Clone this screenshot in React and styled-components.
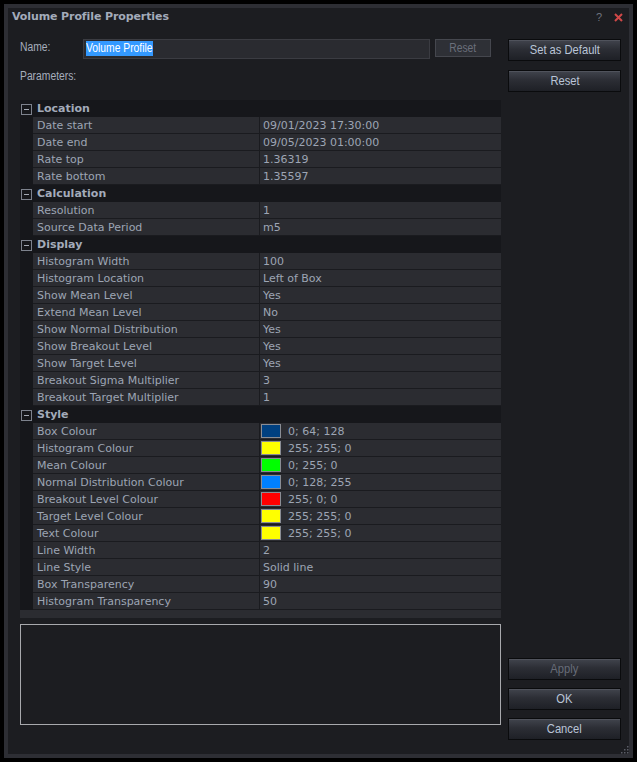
import styled, { createGlobalStyle } from "styled-components";

const GlobalStyle = createGlobalStyle`
  html, body {
    margin: 0;
    padding: 0;
    background: #000;
  }
  body {
    padding: 4px;
    box-sizing: border-box;
    width: 637px;
    height: 762px;
  }
  #root {
    height: 100%;
  }
`;

const sections = [
  {
    title: "Location",
    rows: [
      { name: "Date start", value: "09/01/2023 17:30:00" },
      { name: "Date end", value: "09/05/2023 01:00:00" },
      { name: "Rate top", value: "1.36319" },
      { name: "Rate bottom", value: "1.35597" },
    ],
  },
  {
    title: "Calculation",
    rows: [
      { name: "Resolution", value: "1" },
      { name: "Source Data Period", value: "m5" },
    ],
  },
  {
    title: "Display",
    rows: [
      { name: "Histogram Width", value: "100" },
      { name: "Histogram Location", value: "Left of Box" },
      { name: "Show Mean Level", value: "Yes" },
      { name: "Extend Mean Level", value: "No" },
      { name: "Show Normal Distribution", value: "Yes" },
      { name: "Show Breakout Level", value: "Yes" },
      { name: "Show Target Level", value: "Yes" },
      { name: "Breakout Sigma Multiplier", value: "3" },
      { name: "Breakout Target Multiplier", value: "1" },
    ],
  },
  {
    title: "Style",
    rows: [
      { name: "Box Colour", value: "0; 64; 128", swatch: "#004080" },
      { name: "Histogram Colour", value: "255; 255; 0", swatch: "#ffff00" },
      { name: "Mean Colour", value: "0; 255; 0", swatch: "#00ff00" },
      { name: "Normal Distribution Colour", value: "0; 128; 255", swatch: "#0080ff" },
      { name: "Breakout Level Colour", value: "255; 0; 0", swatch: "#ff0000" },
      { name: "Target Level Colour", value: "255; 255; 0", swatch: "#ffff00" },
      { name: "Text Colour", value: "255; 255; 0", swatch: "#ffff00" },
      { name: "Line Width", value: "2" },
      { name: "Line Style", value: "Solid line" },
      { name: "Box Transparency", value: "90" },
      { name: "Histogram Transparency", value: "50" },
    ],
  },
];

const CollapseIcon = () => (
  <svg width="11" height="11" viewBox="0 0 11 11">
    <rect x="0.5" y="0.5" width="10" height="10" fill="#16171b" stroke="#7d828d" />
    <line x1="3" y1="5.5" x2="8" y2="5.5" stroke="#a3a8b3" />
  </svg>
);

const CloseIcon = () => (
  <svg width="9" height="9" viewBox="0 0 9 9">
    <path d="M1 1 L8 8 M8 1 L1 8" stroke="#d04848" strokeWidth="2" />
  </svg>
);

const Grip = () => (
  <svg width="9" height="9" viewBox="0 0 9 9">
    {[
      [7, 1], [7, 4], [4, 4], [7, 7], [4, 7], [1, 7],
    ].map(([x, y]) => (
      <rect key={`${x}-${y}`} x={x} y={y} width="1.5" height="1.5" fill="#5a5d66" />
    ))}
  </svg>
);

const App = () => {
  return (
    <>
      <GlobalStyle />
      <Frame>
        <TitleBar>
          <Title>Volume Profile Properties</Title>
          <TitleTools>
            <Help>?</Help>
            <CloseIcon />
          </TitleTools>
        </TitleBar>
        <Body>
          <MainColumn>
            <NameRow>
              <Label>
                <Narrow>Name:</Narrow>
              </Label>
              <NameInput>
                <Selected>
                  <Narrow>Volume Profile</Narrow>
                </Selected>
              </NameInput>
              <SmallButton>
                <Narrow>Reset</Narrow>
              </SmallButton>
            </NameRow>
            <ParamsLabel>
              <Narrow>Parameters:</Narrow>
            </ParamsLabel>
            <PropertyGrid>
              {sections.map((section) => (
                <Section key={section.title}>
                  <SectionHeader>
                    <IconCell>
                      <CollapseIcon />
                    </IconCell>
                    <SectionTitle>{section.title}</SectionTitle>
                  </SectionHeader>
                  {section.rows.map((row) => (
                    <Row key={row.name}>
                      <NameCell>{row.name}</NameCell>
                      <ValueCell>
                        {row.swatch && <Swatch color={row.swatch} />}
                        {row.value}
                      </ValueCell>
                    </Row>
                  ))}
                </Section>
              ))}
              <ScrollStrip />
            </PropertyGrid>
            <Description />
          </MainColumn>
          <SideColumn>
            <TopButtons>
              <DialogButton>
                <Narrow>Set as Default</Narrow>
              </DialogButton>
              <DialogButton>
                <Narrow>Reset</Narrow>
              </DialogButton>
            </TopButtons>
            <BottomButtons>
              <DialogButton disabled>
                <Narrow>Apply</Narrow>
              </DialogButton>
              <DialogButton>
                <Narrow>OK</Narrow>
              </DialogButton>
              <DialogButton>
                <Narrow>Cancel</Narrow>
              </DialogButton>
            </BottomButtons>
          </SideColumn>
        </Body>
        <GripCorner>
          <Grip />
        </GripCorner>
      </Frame>
    </>
  );
};

export default App;

const gridFont = `"DejaVu Sans", Verdana, sans-serif`;

// the dialog uses a condensed face for labels and buttons
const Narrow = styled.span`
  display: inline-block;
  font-family: "Liberation Sans", Arial, sans-serif;
  transform: scaleX(0.86);
  transform-origin: center;
  white-space: nowrap;
`;

const Frame = styled.div`
  position: relative;
  box-sizing: border-box;
  width: 629px;
  height: 754px;
  border: 4px solid #2d2e34;
  background: #1c1d21;
  display: flex;
  flex-direction: column;
`;

const TitleBar = styled.div`
  height: 17px;
  display: flex;
  align-items: center;
  justify-content: space-between;
  padding: 0 6px 0 4px;
`;

const Title = styled.div`
  font-family: "DejaVu Sans", sans-serif;
  font-weight: bold;
  font-size: 11px;
  letter-spacing: -0.1px;
  color: #a3abba;
`;

const TitleTools = styled.div`
  display: flex;
  align-items: center;
  gap: 12px;
  padding-top: 1px;
`;

const Help = styled.span`
  font-family: "Liberation Sans", sans-serif;
  font-size: 11px;
  color: #6e737e;
`;

const Body = styled.div`
  flex: 1;
  display: flex;
  gap: 7px;
  padding: 14px 8px 14px 12px;
  min-height: 0;
`;

const MainColumn = styled.div`
  flex: 1;
  display: flex;
  flex-direction: column;
`;

const NameRow = styled.div`
  display: flex;
  align-items: flex-start;
  height: 20px;
`;

const Label = styled.div`
  width: 63px;
  font-size: 12px;
  color: #a6aebd;
  line-height: 16px;
  & > span {
    transform-origin: left center;
  }
`;

const NameInput = styled.div`
  box-sizing: border-box;
  width: 347px;
  height: 20px;
  background: #2a2b30;
  border: 1px solid #3b3c42;
  padding: 1px 2px;
  font-size: 12px;
  line-height: 15px;
`;

const Selected = styled.span`
  display: inline-block;
  background: #3399ff;
  color: #ffffff;
  width: 67px;
  overflow: hidden;
  & > span {
    transform-origin: left center;
  }
`;

const SmallButton = styled.div`
  box-sizing: border-box;
  width: 56px;
  height: 18px;
  margin-left: 5px;
  background: #2e3036;
  border: 1px solid #45474e;
  color: #6a6f7b;
  font-size: 12px;
  line-height: 16px;
  text-align: center;
`;

const ParamsLabel = styled(Label)`
  width: auto;
  margin-top: 9px;
`;

const PropertyGrid = styled.div`
  margin-top: 16px;
  background: #16171b;
  display: flex;
  flex-direction: column;
`;

const Section = styled.div`
  display: flex;
  flex-direction: column;
`;

const SectionHeader = styled.div`
  height: 17px;
  display: flex;
  align-items: center;
  background: #16171b;
`;

const IconCell = styled.div`
  width: 13px;
  display: flex;
  justify-content: center;
  align-items: center;
  padding-top: 1px;
`;

const SectionTitle = styled.div`
  padding-left: 4px;
  font-family: ${gridFont};
  font-weight: bold;
  font-size: 11px;
  color: #a3abba;
`;

const Row = styled.div`
  height: 17px;
  margin-left: 13px;
  display: grid;
  grid-template-columns: 227px 1fr;
  box-sizing: border-box;
  border-bottom: 1px solid #1a1b1f;
`;

const NameCell = styled.div`
  background: #2b2c31;
  border-right: 1px solid #1a1b1f;
  padding: 1px 0 0 4px;
  font-family: ${gridFont};
  font-size: 11px;
  line-height: 15px;
  color: #9da5b4;
  white-space: nowrap;
  overflow: hidden;
`;

const ValueCell = styled.div`
  background: #2b2c31;
  padding: 1px 0 0 3px;
  display: flex;
  align-items: center;
  gap: 7px;
  font-family: ${gridFont};
  font-size: 11px;
  line-height: 15px;
  color: #9da5b4;
  white-space: nowrap;
`;

const Swatch = styled.span`
  box-sizing: border-box;
  width: 20px;
  height: 14px;
  margin: -1px 0 0 -2px;
  border: 1px solid #8a8d94;
  background: ${(p) => p.color};
`;

const ScrollStrip = styled.div`
  height: 8px;
  background: #2b2c31;
`;

const Description = styled.div`
  box-sizing: border-box;
  margin-top: 6px;
  height: 101px;
  border: 1px solid #a8a9ad;
  background: #1c1d21;
`;

const SideColumn = styled.div`
  width: 113px;
  display: flex;
  flex-direction: column;
  justify-content: space-between;
`;

const TopButtons = styled.div`
  display: flex;
  flex-direction: column;
  gap: 9px;
`;

const BottomButtons = styled.div`
  display: flex;
  flex-direction: column;
  gap: 8px;
`;

const DialogButton = styled.div`
  box-sizing: border-box;
  height: 22px;
  border: 1px solid #0a0b0d;
  background: linear-gradient(#41444d 0%, #2c2e35 45%, #1e2026 100%);
  box-shadow: inset 0 1px 0 #50535c;
  color: ${(p) => (p.disabled ? "#676c78" : "#bac5d8")};
  font-size: 13px;
  line-height: 20px;
  text-align: center;
`;

const GripCorner = styled.div`
  position: absolute;
  right: 0;
  bottom: 0;
  line-height: 0;
`;
